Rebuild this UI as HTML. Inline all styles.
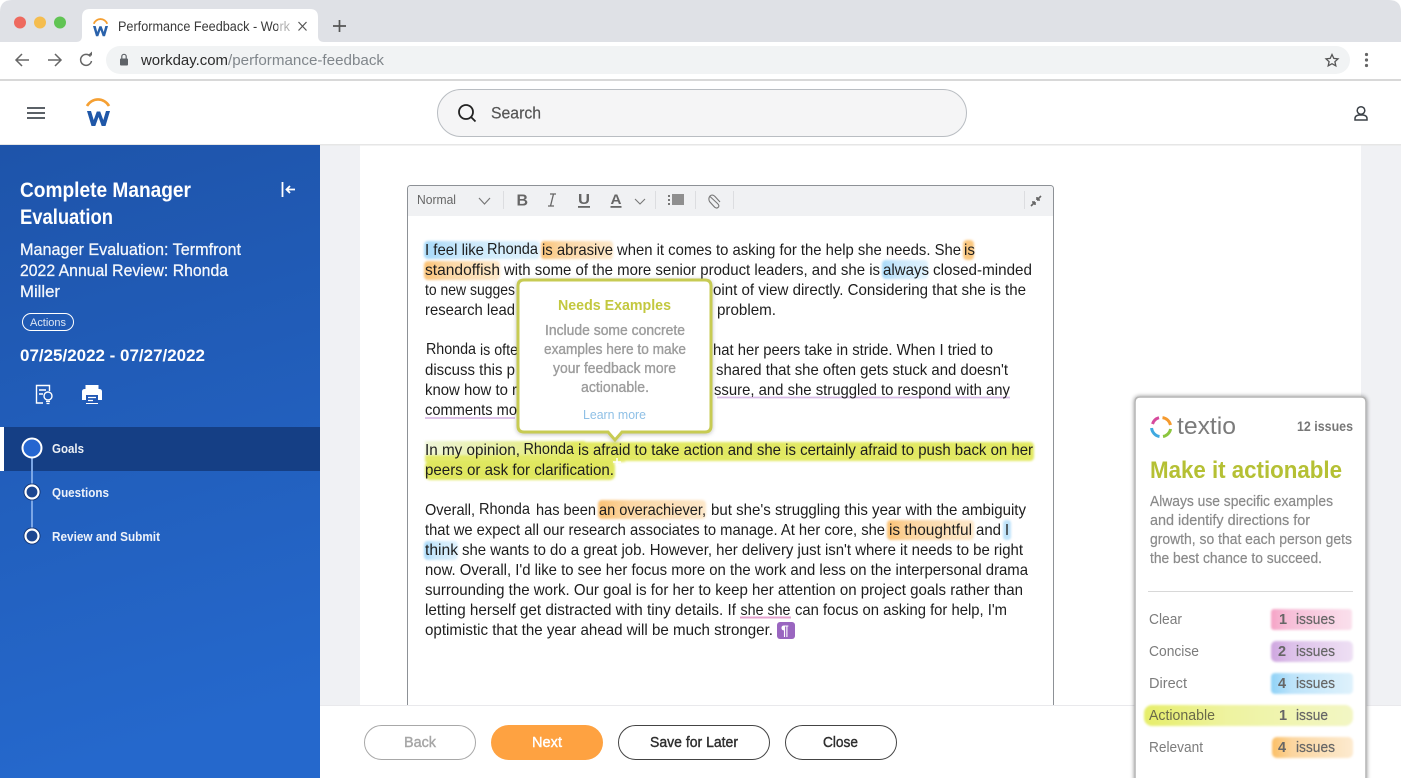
<!DOCTYPE html>
<html lang="en"><head><meta charset="utf-8"><title>Performance Feedback - Workday</title>
<style>
html,body{margin:0;padding:0;width:1401px;height:778px;overflow:hidden;background:#fff}
svg{display:block}
text{font-family:"Liberation Sans",sans-serif}
.b{font-size:16px;fill:#1d1d1d}
.w{fill:#fff}
.sb{font-weight:700}
.r{font-size:14.500px;fill:#7c7c7c}
.c{font-size:14.500px;font-weight:700;fill:#666}
.i{font-size:14.500px;fill:#666;stroke:#666;stroke-width:.2px}
</style></head><body>
<svg width="1401" height="778" viewBox="0 0 1401 778" xmlns="http://www.w3.org/2000/svg">
<defs>
<linearGradient id="side" x1="0" y1="0" x2="0.15" y2="1"><stop offset="0" stop-color="#1e54aa"/><stop offset="1" stop-color="#2568cc"/></linearGradient>
<filter id="soft" x="-10%" y="-30%" width="120%" height="160%"><feGaussianBlur stdDeviation="1"/></filter>
<filter id="sh" x="-10%" y="-10%" width="120%" height="120%"><feDropShadow dx="0" dy="0" stdDeviation="2" flood-color="#000" flood-opacity=".45"/></filter>
<filter id="sh2" x="-10%" y="-10%" width="120%" height="120%"><feDropShadow dx="0" dy="1" stdDeviation="2" flood-color="#000" flood-opacity=".25"/></filter>
<linearGradient id="pk" x1="0" x2="1"><stop offset="0" stop-color="#f5a3c6"/><stop offset=".2" stop-color="#f7bdd7"/><stop offset="1" stop-color="#fae0ec"/></linearGradient>
<linearGradient id="pu" x1="0" x2="1"><stop offset="0" stop-color="#cfa6e0"/><stop offset=".25" stop-color="#dcc0e9"/><stop offset="1" stop-color="#eee0f4"/></linearGradient>
<linearGradient id="bl" x1="0" x2="1"><stop offset="0" stop-color="#8fd2f7"/><stop offset=".25" stop-color="#bce3fa"/><stop offset="1" stop-color="#dff2fc"/></linearGradient>
<linearGradient id="ye" x1="0" x2="1"><stop offset="0" stop-color="#e6ee6a"/><stop offset=".4" stop-color="#eef3a0"/><stop offset="1" stop-color="#f3f6c4"/></linearGradient>
<linearGradient id="or" x1="0" x2="1"><stop offset="0" stop-color="#fbbf66"/><stop offset=".25" stop-color="#fcd6a0"/><stop offset="1" stop-color="#fdeacf"/></linearGradient>
<linearGradient id="ho" x1="0" x2="1"><stop offset="0" stop-color="#fbc275"/><stop offset=".3" stop-color="#fcd7a4"/><stop offset="1" stop-color="#fde8cb"/></linearGradient>
<linearGradient id="hb" x1="0" x2="1"><stop offset="0" stop-color="#a6d9f9"/><stop offset=".3" stop-color="#c8e7fb"/><stop offset="1" stop-color="#e0f2fd"/></linearGradient>
<linearGradient id="hy" x1="0" x2="1"><stop offset="0" stop-color="#eef5d8"/><stop offset="1" stop-color="#e3ea68"/></linearGradient>
</defs>

<!-- browser chrome -->
<path d="M0 42V12Q0 0 12 0H1389Q1401 0 1401 12V42Z" fill="#dfe1e6"/>
<circle cx="20" cy="22.500" r="6" fill="#ee6a5f"/><circle cx="40" cy="22.500" r="6" fill="#f5bd4f"/><circle cx="60" cy="22.500" r="6" fill="#61c454"/>
<path d="M76 42Q82 42 82 36V17Q82 9 90 9H310Q318 9 318 17V36Q318 42 324 42Z" fill="#fff"/>
<path d="M93.800 23.800A7.100 7.100 0 0 1 107.200 23.800" fill="none" stroke="#f5a033" stroke-width="1.800"/>
<path d="M93 26H95.700L97.300 32L99.400 26.300H101.600L103.700 32L105.300 26H108L105 36.200H102.700L100.500 30L98.300 36.200H96Z" fill="#2a62ab"/>
<text x="118" y="31" font-size="13.500" fill="#3a3a3a" textLength="172" lengthAdjust="spacingAndGlyphs">Performance Feedback - Work</text>
<rect x="278" y="15" width="14" height="22" fill="#fff" opacity=".6"/>
<path d="M298.500 22L306.500 30.500M306.500 22L298.500 30.500" stroke="#555" stroke-width="1.200"/>
<path d="M339.500 20V32M333 26H346" stroke="#555" stroke-width="1.700"/>
<rect x="0" y="42" width="1401" height="38" fill="#fff"/>
<path d="M29 60H16.500M22 54L16 60L22 66" fill="none" stroke="#666" stroke-width="1.500"/>
<path d="M48 60H60.500M55 54L61 60L55 66" fill="none" stroke="#666" stroke-width="1.500"/>
<path d="M90.500 56.500A5.500 5.500 0 1 0 91.500 61" fill="none" stroke="#666" stroke-width="1.500"/><path d="M87.500 55.500H92V51.500Z" fill="#666"/>
<rect x="106" y="46" width="1244" height="28" rx="14" fill="#f1f3f4"/>
<rect x="120" y="58.500" width="8" height="7" rx="1" fill="#5f6368"/><path d="M121.800 58.500V56.500A2.200 2.200 0 0 1 126.200 56.500V58.500" fill="none" stroke="#5f6368" stroke-width="1.200"/>
<text x="141" y="65" font-size="15" fill="#2b2b2b" textLength="87" lengthAdjust="spacingAndGlyphs">workday.com</text>
<text x="228" y="65" font-size="15" fill="#80868b" textLength="156" lengthAdjust="spacingAndGlyphs">/performance-feedback</text>
<path d="M1332 54.500L1333.800 58.400L1338 58.900L1334.900 61.700L1335.800 65.800L1332 63.700L1328.200 65.800L1329.100 61.700L1326 58.900L1330.200 58.400Z" fill="none" stroke="#555" stroke-width="1.300"/>
<circle cx="1366.500" cy="54.500" r="1.600" fill="#666"/><circle cx="1366.500" cy="60" r="1.600" fill="#666"/><circle cx="1366.500" cy="65.500" r="1.600" fill="#666"/>
<rect x="0" y="79" width="1401" height="2" fill="#d8d8d8"/>

<!-- page -->
<rect x="320" y="145" width="1081" height="560" fill="#f0f1f4"/>
<rect x="360" y="145" width="1001" height="560" fill="#fff"/>

<!-- app header -->
<rect x="0" y="81" width="1401" height="64" fill="#fff"/>
<rect x="0" y="144" width="1401" height="1.500" fill="#e6e6e6"/>
<path d="M27 108H45M27 113H45M27 118H45" stroke="#444b52" stroke-width="1.800"/>
<path d="M87 106A12.500 12.500 0 0 1 109 106" fill="none" stroke="#f5a033" stroke-width="2.600"/>
<path d="M87 111H91L93.700 120L96.800 111.500H100.200L103.300 120L106 111H110L105.500 126H101.700L98.500 117L95.300 126H91.500Z" fill="#1f57a8"/>
<rect x="437.500" y="89.500" width="529" height="47" rx="23.500" fill="#f5f5f6" stroke="#b9bdc2"/>
<circle cx="466" cy="112" r="7" fill="none" stroke="#222" stroke-width="1.800"/><path d="M471 117L475.500 121.500" stroke="#222" stroke-width="1.800"/>
<text x="491" y="118.500" font-size="17" fill="#555" textLength="50" lengthAdjust="spacingAndGlyphs" stroke="#555" stroke-width=".2">Search</text>
<circle cx="1361" cy="110.500" r="3.800" fill="none" stroke="#3b4147" stroke-width="1.500"/><path d="M1355 120V118.500Q1355 115.500 1359 115H1363Q1367 115.500 1367 118.500V120Z" fill="none" stroke="#3b4147" stroke-width="1.500"/>

<!-- sidebar -->
<rect x="0" y="145" width="320" height="633" fill="url(#side)"/>
<text class="w sb" x="20" y="197" font-size="21" textLength="171" lengthAdjust="spacingAndGlyphs">Complete Manager</text>
<text class="w sb" x="20" y="224" font-size="21" textLength="93" lengthAdjust="spacingAndGlyphs">Evaluation</text>
<path d="M282.500 182V197M295 189.500H286.500M290 186L286.500 189.500L290 193" fill="none" stroke="#fff" stroke-width="1.800"/>
<g stroke="#fff" stroke-width=".25">
<text class="w" x="20" y="255" font-size="17" fill-opacity=".95" textLength="221" lengthAdjust="spacingAndGlyphs">Manager Evaluation: Termfront</text>
<text class="w" x="20" y="276" font-size="17" fill-opacity=".95" textLength="208" lengthAdjust="spacingAndGlyphs">2022 Annual Review: Rhonda</text>
<text class="w" x="20" y="297" font-size="17" fill-opacity=".95" textLength="40" lengthAdjust="spacingAndGlyphs">Miller</text>
</g>
<rect x="22.500" y="313.500" width="51" height="17" rx="8.500" fill="none" stroke="#fff" stroke-width="1"/>
<text class="w" x="30" y="326" font-size="11" fill-opacity=".85" textLength="36" lengthAdjust="spacingAndGlyphs">Actions</text>
<text class="w sb" x="20" y="361" font-size="17" textLength="185" lengthAdjust="spacingAndGlyphs">07/25/2022 - 07/27/2022</text>
<path d="M43 403H36.500V385.500H49.500V391" fill="none" stroke="#fff" stroke-width="1.400"/><path d="M39 390H46M39 394H43" stroke="#fff" stroke-width="1.400"/>
<circle cx="48" cy="396" r="4" fill="none" stroke="#fff" stroke-width="1.400"/><path d="M46 401.500H50M46.500 403.500H49.500" stroke="#fff" stroke-width="1.200"/>
<path d="M82 391.500Q82 389 85 389H99Q102 389 102 391.500V400H98V404H86V400H82Z" fill="#fff"/><rect x="85.500" y="385" width="13" height="4" fill="#fff"/>
<rect x="86" y="395" width="12" height="8" fill="#2158b5"/><path d="M88 397.500H96M88 400.500H93" stroke="#fff" stroke-width="1.200"/>
<rect x="0" y="427" width="320" height="44" fill="#153f85"/><rect x="0" y="427" width="4" height="44" fill="#fff"/>
<path d="M32 456V530" stroke="#7ba6e6" stroke-width="2"/>
<circle cx="32" cy="448" r="9.500" fill="#2566d0" stroke="#fff" stroke-width="2"/>
<circle cx="32" cy="492" r="8.500" fill="#0f2f6c"/><circle cx="32" cy="492" r="6.500" fill="#1c4690" stroke="#fff" stroke-width="2.200"/>
<circle cx="32" cy="536" r="8.500" fill="#0f2f6c"/><circle cx="32" cy="536" r="6.500" fill="#1c4690" stroke="#fff" stroke-width="2.200"/>
<text class="w sb" x="52" y="453" font-size="12.500" fill-opacity=".92" textLength="32" lengthAdjust="spacingAndGlyphs">Goals</text>
<text class="w sb" x="52" y="497" font-size="12.500" fill-opacity=".92" textLength="57" lengthAdjust="spacingAndGlyphs">Questions</text>
<text class="w sb" x="52" y="541" font-size="12.500" fill-opacity=".92" textLength="108" lengthAdjust="spacingAndGlyphs">Review and Submit</text>

<!-- editor -->
<rect x="407.500" y="185.500" width="646" height="530" rx="3" fill="#fff" stroke="#8d9196"/>
<path d="M408 216V189Q408 186 411 186H1050Q1053 186 1053 189V216Z" fill="#f0f1f3"/>
<text x="417" y="204" font-size="12.500" fill="#666" textLength="39" lengthAdjust="spacingAndGlyphs">Normal</text>
<path d="M479 198L484.500 204L490 198" fill="none" stroke="#777" stroke-width="1.200"/>
<path d="M503.500 191V209M655.500 191V209M695.500 191V209M733.500 191V209M1024.500 191V209" stroke="#dcdde0"/>
<text x="516.500" y="205.500" font-size="16" font-weight="700" fill="#666">B</text>
<path d="M550 194H556M548 206H554M553.500 194L550.500 206" fill="none" stroke="#666" stroke-width="1.300"/>
<text x="578" y="204" font-size="15" font-weight="700" fill="#666" textLength="12" lengthAdjust="spacingAndGlyphs">U</text><rect x="578" y="206" width="12" height="1.800" fill="#666"/>
<text x="610.500" y="204" font-size="14" font-weight="700" fill="#666" textLength="11" lengthAdjust="spacingAndGlyphs">A</text><rect x="610.500" y="206" width="11" height="1.800" fill="#666"/>
<path d="M635 199L640 204L645 199" fill="none" stroke="#777" stroke-width="1.100"/>
<path d="M669 195V205" stroke="#777" stroke-width="2" stroke-dasharray="2 2"/><rect x="672" y="194" width="12" height="11" fill="#8f8f8f"/>
<path d="M710 196.500L717.500 203.500Q720 206 718 207.500Q716 209 714 206.500L709.500 201.500Q708 198.500 710 196Q712.500 194 715 196.500L720 202" fill="none" stroke="#777" stroke-width="1.100"/>
<path d="M1031 206L1035 202M1035 202V205M1035 202H1032M1041 196L1037 200M1037 200V197M1037 200H1040" fill="none" stroke="#666" stroke-width="1.600"/>

<!-- highlights -->
<g filter="url(#soft)">
<rect x="424" y="241" width="116" height="18" rx="4" fill="url(#hb)"/>
<rect x="541" y="241" width="72" height="18" rx="3" fill="url(#ho)"/>
<rect x="963" y="240" width="11" height="20" rx="4" fill="#fbc880"/>
<rect x="424" y="261" width="76" height="19" rx="4" fill="url(#ho)"/>
<rect x="882" y="260" width="46" height="19" rx="4" fill="url(#hb)"/>
<rect x="425" y="441" width="160" height="15" fill="url(#hy)"/>
<rect x="425" y="455" width="200" height="7" fill="#e3ea68"/>
<rect x="570" y="442" width="464" height="19" rx="4" fill="#e2e964"/>
<rect x="425" y="461" width="190" height="19" rx="5" fill="#e0e75e"/>
<rect x="598" y="500" width="108" height="19" rx="4" fill="url(#ho)"/>
<rect x="887" y="520" width="87" height="20" rx="4" fill="url(#ho)"/>
<rect x="1003" y="520" width="8" height="20" rx="3" fill="#bfe3fa"/>
<rect x="424" y="541" width="34" height="19" rx="4" fill="url(#hb)"/>
</g>
<path d="M613 462H621M617 458V466" stroke="#fff" stroke-width="1.500"/>
<path d="M717 397.500H1010M425 418H515" stroke="#d9bce6" stroke-width="1.800"/>
<path d="M740 617.500H791" stroke="#e6a4d0" stroke-width="2"/>

<!-- body text -->
<text class="b" x="425" y="255" textLength="59" lengthAdjust="spacingAndGlyphs">I feel like</text>
<text class="b" x="487" y="254" textLength="51" lengthAdjust="spacingAndGlyphs">Rhonda</text>
<text class="b" x="542" y="255" textLength="71" lengthAdjust="spacingAndGlyphs">is abrasive</text>
<text class="b" x="617" y="255" textLength="344" lengthAdjust="spacingAndGlyphs">when it comes to asking for the help she needs. She</text>
<text class="b" x="964" y="255" textLength="11" lengthAdjust="spacingAndGlyphs">is</text>
<text class="b" x="425" y="275" textLength="75" lengthAdjust="spacingAndGlyphs">standoffish</text>
<text class="b" x="504" y="275" textLength="376" lengthAdjust="spacingAndGlyphs">with some of the more senior product leaders, and she is</text>
<text class="b" x="883" y="275" textLength="46" lengthAdjust="spacingAndGlyphs">always</text>
<text class="b" x="933" y="275" textLength="99" lengthAdjust="spacingAndGlyphs">closed-minded</text>
<text class="b" x="425" y="295" textLength="90" lengthAdjust="spacingAndGlyphs">to new sugges</text>
<text class="b" x="713" y="295" textLength="313" lengthAdjust="spacingAndGlyphs">oint of view directly. Considering that she is the</text>
<text class="b" x="425" y="315" textLength="90" lengthAdjust="spacingAndGlyphs">research lead</text>
<text class="b" x="717" y="315" textLength="59" lengthAdjust="spacingAndGlyphs">problem.</text>
<text class="b" x="426" y="354" textLength="50" lengthAdjust="spacingAndGlyphs">Rhonda</text>
<text class="b" x="480" y="355" textLength="38" lengthAdjust="spacingAndGlyphs">is ofte</text>
<text class="b" x="713" y="355" textLength="280" lengthAdjust="spacingAndGlyphs">hat her peers take in stride. When I tried to</text>
<text class="b" x="425" y="375" textLength="90" lengthAdjust="spacingAndGlyphs">discuss this p</text>
<text class="b" x="716" y="375" textLength="292" lengthAdjust="spacingAndGlyphs">shared that she often gets stuck and doesn't</text>
<text class="b" x="425" y="395" textLength="92" lengthAdjust="spacingAndGlyphs">know how to r</text>
<text class="b" x="714" y="395" textLength="296" lengthAdjust="spacingAndGlyphs">ssure, and she struggled to respond with any</text>
<text class="b" x="425" y="415" textLength="92" lengthAdjust="spacingAndGlyphs">comments mo</text>
<text class="b" x="425" y="455" textLength="95" lengthAdjust="spacingAndGlyphs">In my opinion,</text>
<text class="b" x="523.500" y="454" textLength="50.500" lengthAdjust="spacingAndGlyphs">Rhonda</text>
<text class="b" x="578" y="455" textLength="455" lengthAdjust="spacingAndGlyphs">is afraid to take action and she is certainly afraid to push back on her</text>
<text class="b" x="425" y="475" textLength="189" lengthAdjust="spacingAndGlyphs">peers or ask for clarification.</text>
<text class="b" x="425" y="515" textLength="50" lengthAdjust="spacingAndGlyphs">Overall,</text>
<text class="b" x="479" y="514" textLength="51" lengthAdjust="spacingAndGlyphs">Rhonda</text>
<text class="b" x="536" y="515" textLength="60" lengthAdjust="spacingAndGlyphs">has been</text>
<text class="b" x="599" y="515" textLength="107" lengthAdjust="spacingAndGlyphs">an overachiever,</text>
<text class="b" x="711" y="515" textLength="315" lengthAdjust="spacingAndGlyphs">but she's struggling this year with the ambiguity</text>
<text class="b" x="425" y="535" textLength="460" lengthAdjust="spacingAndGlyphs">that we expect all our research associates to manage. At her core, she</text>
<text class="b" x="889" y="535" textLength="83" lengthAdjust="spacingAndGlyphs">is thoughtful</text>
<text class="b" x="976" y="535" textLength="25" lengthAdjust="spacingAndGlyphs">and</text>
<text class="b" x="1005" y="535" textLength="4" lengthAdjust="spacingAndGlyphs">I</text>
<text class="b" x="425" y="555" textLength="33" lengthAdjust="spacingAndGlyphs">think</text>
<text class="b" x="462" y="555" textLength="561" lengthAdjust="spacingAndGlyphs">she wants to do a great job. However, her delivery just isn't where it needs to be right</text>
<text class="b" x="425" y="575" textLength="603" lengthAdjust="spacingAndGlyphs">now. Overall, I'd like to see her focus more on the work and less on the interpersonal drama</text>
<text class="b" x="425" y="595" textLength="598" lengthAdjust="spacingAndGlyphs">surrounding the work. Our goal is for her to keep her attention on project goals rather than</text>
<text class="b" x="425" y="615" textLength="311" lengthAdjust="spacingAndGlyphs">letting herself get distracted with tiny details. If</text>
<text class="b" x="740.500" y="615" textLength="50" lengthAdjust="spacingAndGlyphs">she she</text>
<text class="b" x="795" y="615" textLength="212" lengthAdjust="spacingAndGlyphs">can focus on asking for help, I'm</text>
<text class="b" x="425" y="635" textLength="348" lengthAdjust="spacingAndGlyphs">optimistic that the year ahead will be much stronger.</text>
<rect x="777" y="622" width="18" height="17" rx="3" fill="#9a66c0"/>
<text x="781" y="635" font-size="14" font-weight="700" fill="#fff">¶</text>

<!-- popup -->
<g filter="url(#sh2)">
<path d="M524 280H705Q711 280 711 286V426Q711 432 705 432H622L615 440L608 432H524Q518 432 518 426V286Q518 280 524 280Z" fill="#fff" stroke="#c7cb52" stroke-width="3"/>
</g>
<text x="558" y="310" font-size="15" font-weight="700" fill="#c3c83f" textLength="113" lengthAdjust="spacingAndGlyphs">Needs Examples</text>
<g font-size="14.500" fill="#9c9c9c" stroke="#9c9c9c" stroke-width=".35">
<text x="545" y="335" textLength="140" lengthAdjust="spacingAndGlyphs">Include some concrete</text>
<text x="544" y="354" textLength="142" lengthAdjust="spacingAndGlyphs">examples here to make</text>
<text x="553" y="373" textLength="123" lengthAdjust="spacingAndGlyphs">your feedback more</text>
<text x="581" y="392" textLength="68" lengthAdjust="spacingAndGlyphs">actionable.</text>
</g>
<text x="583" y="419" font-size="13" fill="#8fc0e6" textLength="63" lengthAdjust="spacingAndGlyphs">Learn more</text>

<!-- bottom bar -->
<rect x="320" y="705" width="1081" height="73" fill="#fff"/><rect x="320" y="705" width="1081" height="1" fill="#e9e9ec"/>
<rect x="364.500" y="725.500" width="111" height="34" rx="17" fill="#fff" stroke="#a8a8a8"/>
<rect x="491" y="725" width="112" height="35" rx="17.500" fill="#fea241"/>
<rect x="618.500" y="725.500" width="151" height="34" rx="17" fill="#fff" stroke="#444"/>
<rect x="785.500" y="725.500" width="111" height="34" rx="17" fill="#fff" stroke="#444"/>
<g font-size="15" stroke-width=".4">
<text x="404" y="747" fill="#a6a6a6" stroke="#a6a6a6" textLength="32" lengthAdjust="spacingAndGlyphs">Back</text>
<text x="532" y="747" fill="#fff" stroke="#fff" textLength="30" lengthAdjust="spacingAndGlyphs">Next</text>
<text x="650" y="747" fill="#2e2e2e" stroke="#2e2e2e" textLength="88" lengthAdjust="spacingAndGlyphs">Save for Later</text>
<text x="823" y="747" fill="#2e2e2e" stroke="#2e2e2e" textLength="35" lengthAdjust="spacingAndGlyphs">Close</text>
</g>

<!-- textio panel -->
<g filter="url(#sh)"><path d="M1135 790V402Q1135 397 1140 397H1361Q1366 397 1366 402V790Z" fill="#fff" stroke="#b4b4b4" stroke-width="1.500"/></g>
<g fill="none" stroke-width="3">
<path d="M1152.500 424A9.500 9.500 0 0 1 1159 417.700" stroke="#d64a9c"/>
<path d="M1162.500 417.600A9.500 9.500 0 0 1 1170.500 425" stroke="#f59a2e"/>
<path d="M1170.600 429A9.500 9.500 0 0 1 1163 436.500" stroke="#8cc63f"/>
<path d="M1159.500 436.500A9.500 9.500 0 0 1 1151.600 428" stroke="#3fa9e0"/>
</g>
<text x="1177" y="434" font-size="24" fill="#7b7b7b" textLength="59" lengthAdjust="spacingAndGlyphs">textio</text>
<text x="1297" y="431" font-size="13.500" font-weight="700" fill="#777" textLength="56" lengthAdjust="spacingAndGlyphs">12 issues</text>
<text x="1150" y="478" font-size="24" font-weight="700" fill="#b5c034" textLength="192" lengthAdjust="spacingAndGlyphs">Make it actionable</text>
<g font-size="14.500" fill="#8a8a8a" stroke="#8a8a8a" stroke-width=".2">
<text x="1150" y="506" textLength="183" lengthAdjust="spacingAndGlyphs">Always use specific examples</text>
<text x="1150" y="525" textLength="160" lengthAdjust="spacingAndGlyphs">and identify directions for</text>
<text x="1150" y="544" textLength="202" lengthAdjust="spacingAndGlyphs">growth, so that each person gets</text>
<text x="1150" y="563" textLength="172" lengthAdjust="spacingAndGlyphs">the best chance to succeed.</text>
</g>
<rect x="1148" y="591" width="205" height="1" fill="#d8d8d8"/>
<g filter="url(#soft)">
<rect x="1271" y="609" width="81" height="21" rx="3" fill="url(#pk)"/>
<rect x="1271" y="641" width="82" height="21" rx="5" fill="url(#pu)"/>
<rect x="1271" y="673" width="82" height="21" rx="4" fill="url(#bl)"/>
<rect x="1144" y="705" width="209" height="21" rx="8" fill="url(#ye)"/>
<rect x="1272" y="737" width="81" height="21" rx="5" fill="url(#or)"/>
</g>
<text class="r" x="1149" y="624" textLength="33" lengthAdjust="spacingAndGlyphs">Clear</text>
<text class="r" x="1149" y="656" textLength="50" lengthAdjust="spacingAndGlyphs">Concise</text>
<text class="r" x="1149" y="688" textLength="38" lengthAdjust="spacingAndGlyphs">Direct</text>
<text class="r" x="1149" y="720" textLength="66" lengthAdjust="spacingAndGlyphs" style="fill:#6a6a4a">Actionable</text>
<text class="r" x="1149" y="752" textLength="54" lengthAdjust="spacingAndGlyphs">Relevant</text>
<text class="c" x="1279" y="624">1</text><text class="i" x="1296" y="624" textLength="39" lengthAdjust="spacingAndGlyphs">issues</text>
<text class="c" x="1278" y="656">2</text><text class="i" x="1296" y="656" textLength="39" lengthAdjust="spacingAndGlyphs">issues</text>
<text class="c" x="1278" y="688">4</text><text class="i" x="1296" y="688" textLength="39" lengthAdjust="spacingAndGlyphs">issues</text>
<text class="c" x="1279" y="720">1</text><text class="i" x="1296" y="720" textLength="32" lengthAdjust="spacingAndGlyphs">issue</text>
<text class="c" x="1278" y="752">4</text><text class="i" x="1296" y="752" textLength="39" lengthAdjust="spacingAndGlyphs">issues</text>
</svg>
</body></html>
